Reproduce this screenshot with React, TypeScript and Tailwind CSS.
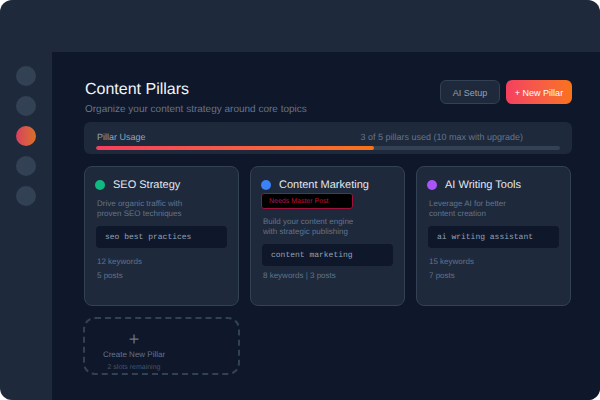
const pillars = [
  {
    name: "SEO Strategy",
    dot: "bg-[#10b981]",
    lines: ["Drive organic traffic with", "proven SEO techniques"],
    code: "seo best practices",
    stats: ["12 keywords", "5 posts"],
  },
  {
    name: "Content Marketing",
    dot: "bg-[#3b82f6]",
    badge: "Needs Master Post",
    lines: ["Build your content engine", "with strategic publishing"],
    code: "content marketing",
    stats: ["8 keywords | 3 posts"],
  },
  {
    name: "AI Writing Tools",
    dot: "bg-[#a855f7]",
    lines: ["Leverage AI for better", "content creation"],
    code: "ai writing assistant",
    stats: ["15 keywords", "7 posts"],
  },
];

type Pillar = (typeof pillars)[number] & { badge?: string };

function PillarCard({ pillar }: { pillar: Pillar }) {
  return (
    <div className="h-[140px] rounded-lg border border-[#334155] bg-[#1e293b] pl-[10px] pr-[11px] pt-[11px]">
      <div className="flex h-[14px] items-center gap-2">
        <span className={`h-[10px] w-[10px] rounded-full ${pillar.dot}`} />
        <span className="font-['Liberation_Sans'] text-[11px] leading-[14px] text-[#e2e8f0]">
          {pillar.name}
        </span>
      </div>
      {pillar.badge && (
        <div className="mt-[1px] flex h-4 w-[92px] items-center rounded-[3px] border border-[#9f1239] bg-black pl-[7px] pt-[3px] font-['Liberation_Sans'] text-[7px] text-[#be123c]">
          {pillar.badge}
        </div>
      )}
      <div
        className={`${pillar.badge ? "mt-[8px]" : "mt-[7px]"} pl-[2px] font-['Liberation_Sans'] text-[8px] leading-[10px] text-[#64748b]`}
      >
        {pillar.lines.map((line) => (
          <div key={line}>{line}</div>
        ))}
      </div>
      <div className="ml-px mt-[7px] flex h-[22px] items-center rounded bg-[#0f172a] pl-[9px] pt-[2px] font-['Liberation_Mono'] text-[8px] text-[#94a3b8]">
        {pillar.code}
      </div>
      <div
        className={`${pillar.badge ? "mt-[5px]" : "mt-[9px]"} flex flex-col gap-[4px] pl-[2px] font-['Liberation_Sans'] text-[8px] leading-[10px] text-[#64748b]`}
      >
        {pillar.stats.map((stat) => (
          <div key={stat}>{stat}</div>
        ))}
      </div>
    </div>
  );
}

export default function App() {
  return (
    <div className="h-[400px] w-[600px] overflow-hidden bg-white antialiased [text-rendering:geometricPrecision]">
      <div className="flex h-full flex-col overflow-hidden rounded-xl bg-[#1e293b]">
        <div className="h-[52px] shrink-0" />
        <div className="flex min-h-0 flex-1">
          <aside className="flex w-[52px] shrink-0 flex-col items-center gap-[10px] pt-[14px]">
            <span className="h-5 w-5 rounded-full bg-[#334155]" />
            <span className="h-5 w-5 rounded-full bg-[#334155]" />
            <span className="h-5 w-5 rounded-full bg-gradient-to-r from-[#d63f5c] to-[#d9701f]" />
            <span className="h-5 w-5 rounded-full bg-[#334155]" />
            <span className="h-5 w-5 rounded-full bg-[#334155]" />
          </aside>
          <main className="flex-1 bg-[#0f172a] pl-8 pr-7 pt-7">
            <div className="flex h-[42px] items-start justify-between">
              <div className="pl-px pt-px">
                <h1 className="font-['Liberation_Sans'] text-[16px] leading-[18px] text-[#f1f5f9]">
                  Content Pillars
                </h1>
                <p className="mt-[5px] font-['Liberation_Sans'] text-[10px] leading-[12px] text-[#64748b]">
                  Organize your content strategy around core topics
                </p>
              </div>
              <div className="flex gap-[6px]">
                <button className="h-6 w-[60px] rounded-md border border-[#334155] bg-[#1e293b] pt-[3px] font-['Liberation_Sans'] text-[9px] text-[#94a3b8]">
                  AI Setup
                </button>
                <button className="h-6 w-[66px] rounded-md bg-gradient-to-r from-[#f43f5e] to-[#f97316] pt-[3px] font-['Liberation_Sans'] text-[9px] text-white">
                  + New Pillar
                </button>
              </div>
            </div>

            <div className="h-8 rounded-md bg-[#1e293b] px-3 pt-[10px]">
              <div className="flex justify-between pl-px pr-[37px] font-['Liberation_Sans'] text-[9px] leading-[11px]">
                <span className="text-[#94a3b8]">Pillar Usage</span>
                <span className="text-[#64748b]">3 of 5 pillars used (10 max with upgrade)</span>
              </div>
              <div className="mt-[3px] h-1 overflow-hidden rounded-full bg-[#334155]">
                <div className="h-full w-3/5 rounded-full bg-gradient-to-r from-[#f43f5e] to-[#f97316]" />
              </div>
            </div>

            <div className="mt-3 grid w-[487px] grid-cols-3 gap-[11px]">
              {pillars.map((pillar) => (
                <PillarCard key={pillar.name} pillar={pillar} />
              ))}
            </div>

            <div className="-ml-px mt-[11px] h-[58px] w-[157px] rounded-xl border-2 border-dashed border-[#334155]">
              <div className="flex w-[98px] flex-col items-center">
                <span className="mt-[10px] font-['Liberation_Sans'] text-[18px] leading-[20px] text-[#64748b]">
                  +
                </span>
                <span className="mt-px font-['Liberation_Sans'] text-[8px] leading-[10px] text-[#64748b]">
                  Create New Pillar
                </span>
                <span className="mt-[3px] font-['Liberation_Sans'] text-[7px] leading-[9px] text-[#475569]">
                  2 slots remaining
                </span>
              </div>
            </div>
          </main>
        </div>
      </div>
    </div>
  );
}
